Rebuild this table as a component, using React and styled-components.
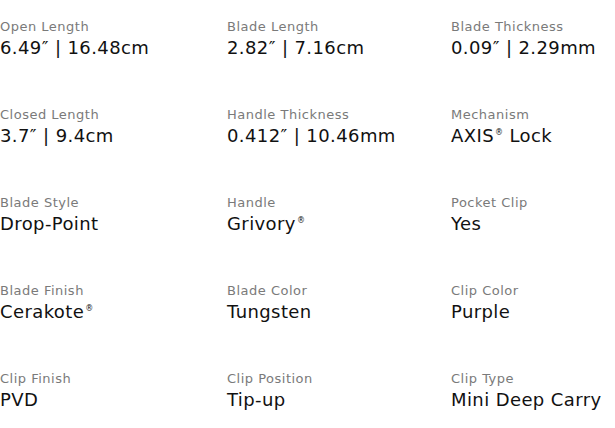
import React from "react";
import styled, { createGlobalStyle } from "styled-components";

const GlobalStyle = createGlobalStyle`
  html, body {
    margin: 0;
    padding: 0;
    background: #fff;
  }
  body {
    font-family: "DejaVu Sans", "Liberation Sans", sans-serif;
    -webkit-font-smoothing: antialiased;
  }
`;

const SpecGrid = styled.dl`
  display: grid;
  grid-template-columns: 227px 224px 1fr;
  grid-template-rows: repeat(4, 88px) auto;
  margin: 0;
  padding: 18px 0 0 0;
`;

const Spec = styled.div`
  display: flex;
  flex-direction: column;
`;

const Label = styled.dt`
  font-size: 13px;
  line-height: 18px;
  letter-spacing: 0.5px;
  color: #7a7a7a;
  margin: 0;
`;

const Value = styled.dd`
  font-size: 18px;
  line-height: 22px;
  letter-spacing: 0.4px;
  color: #111;
  margin: 1px 0 0 0;
  white-space: nowrap;
`;

const Reg = styled.sup`
  font-size: 8px;
  vertical-align: 7px;
  line-height: 0;
  margin-left: 1px;
`;

const specs = [
  ["Open Length", "6.49″ | 16.48cm"],
  ["Blade Length", "2.82″ | 7.16cm"],
  ["Blade Thickness", "0.09″ | 2.29mm"],
  ["Closed Length", "3.7″ | 9.4cm"],
  ["Handle Thickness", "0.412″ | 10.46mm"],
  ["Mechanism", <>AXIS<Reg>®</Reg> Lock</>],
  ["Blade Style", "Drop-Point"],
  ["Handle", <>Grivory<Reg>®</Reg></>],
  ["Pocket Clip", "Yes"],
  ["Blade Finish", <>Cerakote<Reg>®</Reg></>],
  ["Blade Color", "Tungsten"],
  ["Clip Color", "Purple"],
  ["Clip Finish", "PVD"],
  ["Clip Position", "Tip-up"],
  ["Clip Type", "Mini Deep Carry"],
];

const App = () => {
  return (
    <>
      <GlobalStyle />
      <SpecGrid>
        {specs.map(([label, value]) => (
          <Spec key={label}>
            <Label>{label}</Label>
            <Value>{value}</Value>
          </Spec>
        ))}
      </SpecGrid>
    </>
  );
};

export default App;
